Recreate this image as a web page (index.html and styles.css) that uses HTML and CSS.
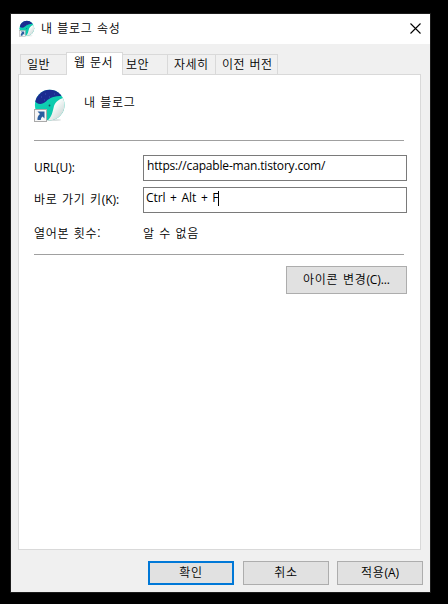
FILE: index.html
```html
<!DOCTYPE html>
<html lang="ko">
<head>
    <meta charset="UTF-8">
    <title>내 블로그 속성</title>
    <link rel="stylesheet" href="styles.css">
</head>
<body>
    <svg class="defs" width="0" height="0">
        <defs>
            <linearGradient id="teal" x1="0" y1="0" x2="1" y2="1">
                <stop offset="0" stop-color="#13d8ba"/>
                <stop offset="1" stop-color="#08bfa3"/>
            </linearGradient>
            <linearGradient id="belly" x1="0" y1="0" x2="1" y2="1">
                <stop offset="0.4" stop-color="#f6faf9"/>
                <stop offset="1" stop-color="#b4c4c3"/>
            </linearGradient>
            <clipPath id="ball"><ellipse cx="15.700" cy="16" rx="14.800" ry="15.200"/></clipPath>
            <symbol id="whale" viewBox="0 0 32 33">
                <ellipse cx="18" cy="31" rx="9" ry="1" fill="#d9dfdf"/>
                <g clip-path="url(#ball)">
                    <rect x="0" y="0" width="33" height="32" fill="url(#teal)"/>
                    <path d="M32 8C26 10 22 12 20 17C18.500 23 18 28 13 32H33Z" fill="url(#belly)"/>
                    <path d="M0 11C3 16 8 16 12 12.500C16 8.500 20 7 28 7C26 3 22 0 15 0C7 0 2 3 0 11Z" fill="#1b2c90"/>
                    <path d="M7 8h1M11 5h1M15 8h1M10 11h1M20 5h1" stroke="#3f51b5"/>
                </g>
                <circle cx="15.500" cy="16.500" r="0.900" fill="#15505f"/>
                <rect x="0.500" y="20.500" width="12" height="12" fill="#f7f7f7" stroke="#aaa"/>
                <path d="M3.500 22.500H10.500V29.500L8.500 27.500C7.500 28.500 6.800 29.500 6.800 31H3.500C3.200 28.500 4 26.500 6 25Z" fill="#2a5da0"/>
            </symbol>
        </defs>
    </svg>

    <div class="window">
        <div class="titlebar">
            <svg class="title-icon"><use href="#whale"/></svg>
            <span class="title">내 블로그 속성</span>
            <svg class="close" viewBox="0 0 11 11"><path d="M0.500 0.500L10.500 10.500M10.500 0.500L0.500 10.500" stroke="#000" stroke-width="1.100"/></svg>
        </div>

        <div class="tabs">
            <div class="tab tab-general">일반</div>
            <div class="tab active">웹 문서</div>
            <div class="tab tab-security">보안</div>
            <div class="tab tab-details">자세히</div>
            <div class="tab tab-versions">이전 버전</div>
        </div>

        <div class="panel">
            <div class="header">
                <svg class="doc-icon"><use href="#whale"/></svg>
                <span class="doc-name">내 블로그</span>
            </div>
            <div class="fields">
                <div class="row">
                    <label class="label"><span class="latin">URL(U):</span></label>
                    <div class="input url">https://capable-man.tistory.com/</div>
                </div>
                <div class="row">
                    <label class="label">바로 가기 키<span class="latin">(K):</span></label>
                    <div class="input shortcut"><span>Ctrl + Alt + F</span><i class="caret"></i></div>
                </div>
                <div class="row visits">
                    <span class="label">열어본 횟수:</span>
                    <span class="value">알 수 없음</span>
                </div>
            </div>
            <div class="actions">
                <button class="btn btn-icon">아이콘 변경<span class="latin">(C)...</span></button>
            </div>
        </div>

        <div class="footer">
            <button class="btn btn-default">확인</button>
            <button class="btn">취소</button>
            <button class="btn btn-apply">적용<span class="latin">(A)</span></button>
        </div>
    </div>
</body>
</html>
```

FILE: styles.css
```css
* { box-sizing: border-box; }
body { margin: 0; padding: 13px 17px 11px 10px; height: 604px; background: #000; color: #000; font: 12px/16px "Noto Sans CJK KR", sans-serif; font-weight: 350; letter-spacing: 0.7px; word-spacing: 0.5px; white-space: nowrap; overflow: hidden; }
.defs { position: absolute; }
.latin { font-family: "Open Sans", sans-serif; font-weight: 400; letter-spacing: -0.1px; }

.window { display: flex; flex-direction: column; height: 580px; background: #f0f0f0; border: 1px solid #1c1c1c; }
.titlebar { display: flex; align-items: center; height: 30px; padding: 0 10px 2px 8px; background: #fff; }
.title-icon { width: 16px; height: 17px; }
.title { flex: 1; margin-left: 6px; }
.close { width: 11px; height: 11px; margin-right: -0.5px; }

.tabs { display: flex; align-items: flex-end; height: 31px; padding: 0 9px; margin-bottom: -1px; }
.tab { height: 21px; padding: 1px 0 0 6px; border: 1px solid #d9d9d9; border-left: 0; letter-spacing: 0.5px; word-spacing: 0.6px; }
.tab-general { width: 46px; border-left: 1px solid #d9d9d9; border-right: 0; }
.active { width: 57px; height: 23px; padding: 1px 0 0 7px; background: #fff; border-left: 1px solid #d9d9d9; border-bottom: 0; z-index: 1; }
.tab-security { width: 45px; padding-left: 3px; }
.tab-details { width: 48px; }
.tab-versions { width: 62px; padding-left: 6px; }

.panel { width: 403px; height: 476px; margin-left: 7px; padding: 14px 13px 0 15px; background: #fff; border: 1px solid #d9d9d9; }
.header { display: flex; height: 52px; margin-right: 3px; border-bottom: 1px solid #a0a0a0; }
.doc-icon { width: 32px; height: 33px; }
.doc-name { margin: 5px 0 0 18px; }
.fields { display: flex; flex-direction: column; gap: 6px; height: 114px; padding-top: 14px; margin-right: 3px; border-bottom: 1px solid #a0a0a0; }
.row { display: flex; height: 26px; align-items: center; }
.label { width: 109px; flex: none; padding-bottom: 2px; }
.input { width: 264px; height: 26px; flex: none; padding: 2px 0 0 3px; border: 1px solid #7a7a7a; font-family: "Open Sans", sans-serif; font-weight: 400; letter-spacing: -0.17px; }
.shortcut { display: flex; padding-left: 2px; letter-spacing: -0.1px; word-spacing: 1.7px; }
.caret { width: 1px; height: 15px; background: #000; margin-top: 1px; }
.visits { padding-top: 3px; }
.value { padding-bottom: 2px; }
.actions { display: flex; justify-content: flex-end; padding-top: 11px; }

.btn { width: 86px; height: 24px; padding: 0 0 2px; background: #e1e1e1; border: 1px solid #adadad; color: #000; font: inherit; letter-spacing: inherit; word-spacing: inherit; }
.btn-icon { width: 121px; height: 28px; }
.btn-default { border: 2px solid #0078d7; }
.footer { display: flex; justify-content: flex-end; gap: 9px; padding: 11px 7px 0 0; }
.btn-apply { margin-left: -1px; }
```
